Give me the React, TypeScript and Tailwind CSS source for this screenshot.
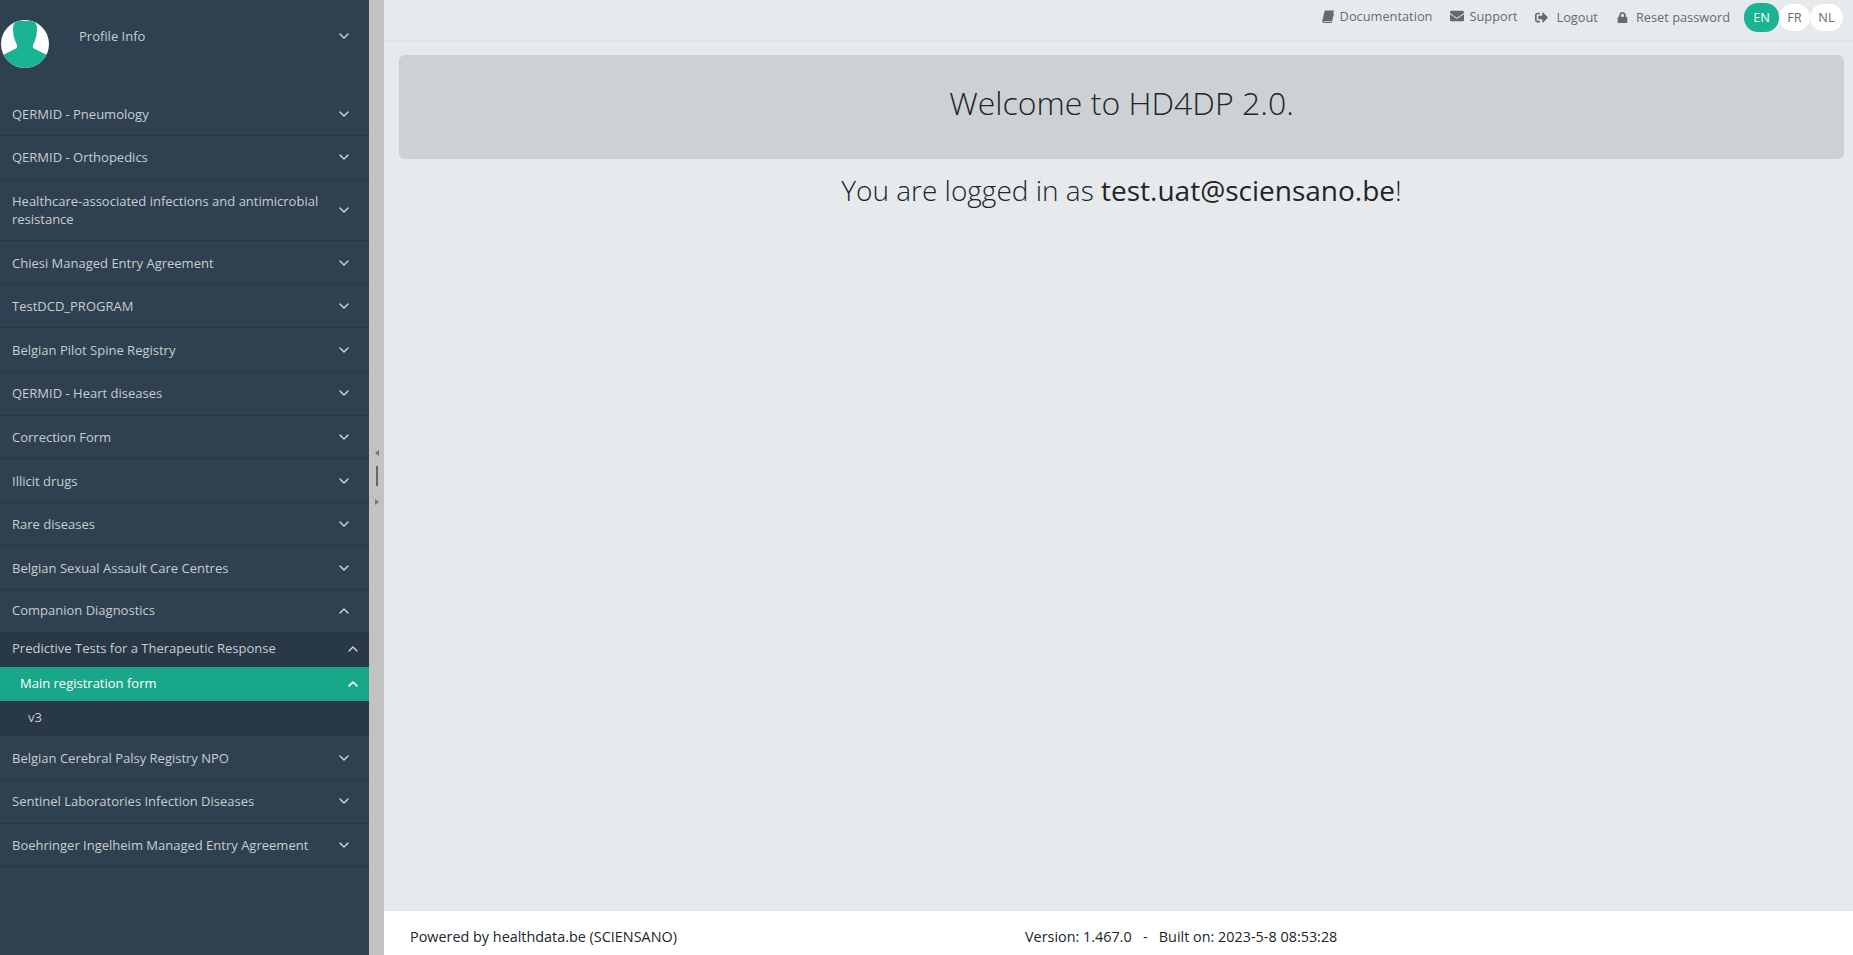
import { ChevronDown, ChevronUp } from "lucide-react";
import { FaEnvelope, FaSignOutAlt, FaLock } from "react-icons/fa";

const topItems = [
  "QERMID - Pneumology",
  "QERMID - Orthopedics",
  "Healthcare-associated infections and antimicrobial resistance",
  "Chiesi Managed Entry Agreement",
  "TestDCD_PROGRAM",
  "Belgian Pilot Spine Registry",
  "QERMID - Heart diseases",
  "Correction Form",
  "Illicit drugs",
  "Rare diseases",
  "Belgian Sexual Assault Care Centres",
];

const bottomItems = [
  "Belgian Cerebral Palsy Registry NPO",
  "Sentinel Laboratories Infection Diseases",
  "Boehringer Ingelheim Managed Entry Agreement",
];

function NavRow({ label }: { label: string }) {
  return (
    <div className="flex items-center justify-between border-b border-[#263747] py-[12.3px] pl-3 pr-[17px] text-[13px] leading-[18px] text-[#c8cdd0]">
      <span className="max-w-[315px]">{label}</span>
      <ChevronDown size={16} strokeWidth={2} className="shrink-0 text-[#d5d9dc]" />
    </div>
  );
}

function Avatar() {
  return (
    <svg width="48" height="48" viewBox="0 0 48 48" className="ml-px">
      <defs>
        <clipPath id="avatar-clip">
          <circle cx="24" cy="24" r="24" />
        </clipPath>
      </defs>
      <circle cx="24" cy="24" r="24" fill="#fff" />
      <g clipPath="url(#avatar-clip)" fill="#1ab394">
        <path d="M18 1h12c4 0 6 3 6 8 0 7-2 12-4 16v3l16 8v12H0V36l16-8v-3c-2-4-4-9-4-16 0-5 2-8 6-8z" />
      </g>
    </svg>
  );
}

function BookIcon() {
  return (
    <svg width="12" height="13" viewBox="0 0 12 13" fill="currentColor" className="shrink-0">
      <path d="M3.2 0.5H11.6c.3 0 .4.3.3.6L9.4 10.4c-.1.3-.3.5-.6.5H2c-.6 0-.8.5-.5.8h7.6l2.2-8.2.7.4-2.3 8.7c-.1.3-.3.4-.6.4H1.6C.6 12.5 0 11.6.3 10.6L2.6 1.1c.1-.4.3-.6.6-.6z" />
    </svg>
  );
}

function TopLink({ icon, label, className }: { icon: React.ReactNode; label: string; className: string }) {
  return (
    <span className={`flex items-center text-[12.8px] leading-[18px] text-[#676a6c] ${className}`}>
      {icon}
      {label}
    </span>
  );
}

export default function App() {
  return (
    <div className="flex h-[955px] w-[1853px] overflow-hidden bg-[#e7eaec] font-['Open_Sans',sans-serif]">
      <aside className="flex w-[369px] shrink-0 flex-col bg-[#2f4050]">
        <div className="flex h-[92.5px] items-start pr-[17px] pt-5">
          <Avatar />
          <span className="ml-[30px] mt-[7px] flex-1 text-[13px] leading-[18px] text-[#c8cdd0]">Profile Info</span>
          <ChevronDown size={16} strokeWidth={2} className="mt-[8px] text-[#d5d9dc]" />
        </div>
        {topItems.map((item) => (
          <NavRow key={item} label={item} />
        ))}
        <div className="flex h-[41.5px] items-center justify-between pl-3 pr-[17px] text-[13px] text-[#c8cdd0]">
          <span>Companion Diagnostics</span>
          <ChevronUp size={16} strokeWidth={2} className="text-[#d5d9dc]" />
        </div>
        <div className="bg-[#293846]">
          <div className="flex h-[35px] items-center justify-between pl-3 pr-[8px] text-[13px] text-[#c8cdd0]">
            <span>Predictive Tests for a Therapeutic Response</span>
            <ChevronUp size={16} strokeWidth={2} className="text-[#d5d9dc]" />
          </div>
          <div className="flex h-[34px] items-center justify-between border-y-2 border-r-2 border-[#17a385] bg-[#19a789] pl-5 pr-[6px] text-[13px] text-white">
            <span>Main registration form</span>
            <ChevronUp size={16} strokeWidth={2.5} className="text-white" />
          </div>
          <div className="flex h-[36px] items-center border-b border-[#2f4050] pl-7 text-[13px] text-[#c8cdd0]">v3</div>
        </div>
        {bottomItems.map((item) => (
          <NavRow key={item} label={item} />
        ))}
      </aside>

      <div className="flex w-[15px] shrink-0 flex-col items-center justify-center bg-[#c2c2c2]">
        <span className="h-0 w-0 border-y-[3px] border-r-[4px] border-y-transparent border-r-[#6b7a80]" />
        <span className="mb-[13px] mt-[10px] h-5 w-0.5 bg-[#666]" />
        <span className="h-0 w-0 border-y-[3px] border-l-[4px] border-y-transparent border-l-[#6b7a80]" />
      </div>

      <main className="flex min-w-0 flex-1 flex-col">
        <header className="flex h-[41px] items-start justify-end border-b border-[#dfe3e6] pr-[10px] pt-[3px]">
          <TopLink icon={<BookIcon />} label="Documentation" className="mr-[18px] mt-[4px] gap-[6px]" />
          <TopLink icon={<FaEnvelope size={14} />} label="Support" className="mr-[18px] mt-[4px] gap-[5px]" />
          <TopLink icon={<FaSignOutAlt size={13} />} label="Logout" className="mr-[19px] mt-[5px] gap-[8px]" />
          <TopLink icon={<FaLock size={11} />} label="Reset password" className="mr-[14px] mt-[5px] gap-[8px]" />
          <div className="flex items-center text-[12.8px]">
            <span className="z-10 flex h-[29px] w-[35px] items-center justify-center rounded-[14px] bg-[#1ab394] text-white">EN</span>
            <span className="flex h-[27px] w-[31px] items-center justify-center rounded-[14px] bg-white text-[#676a6c]">FR</span>
            <span className="flex h-[27px] w-[33px] items-center justify-center rounded-[14px] bg-white text-[#676a6c]">NL</span>
          </div>
        </header>
        <div className="flex-1 pl-[15px] pr-[9px] pt-[14px]">
          <div className="flex h-[104px] items-center justify-center rounded-md bg-[#cdd1d4] pb-[8px] text-[32px] font-light text-[#212529]">
            Welcome to HD4DP 2.0.
          </div>
          <p className="mt-[10px] text-center text-[28px] font-light leading-[42px] text-[#212529]">
            You are logged in as <span className="font-normal">test.uat@sciensano.be</span>!
          </p>
        </div>
        <footer className="flex h-[45px] items-start border-t border-[#dfe3e6] bg-white pl-[26px] pt-[16px] text-[14.4px] leading-[20px] text-[#212529]">
          <span className="w-[615px]">Powered by healthdata.be (SCIENSANO)</span>
          <span className="whitespace-pre">Version: 1.467.0   -   Built on: 2023-5-8 08:53:28</span>
        </footer>
      </main>
    </div>
  );
}
